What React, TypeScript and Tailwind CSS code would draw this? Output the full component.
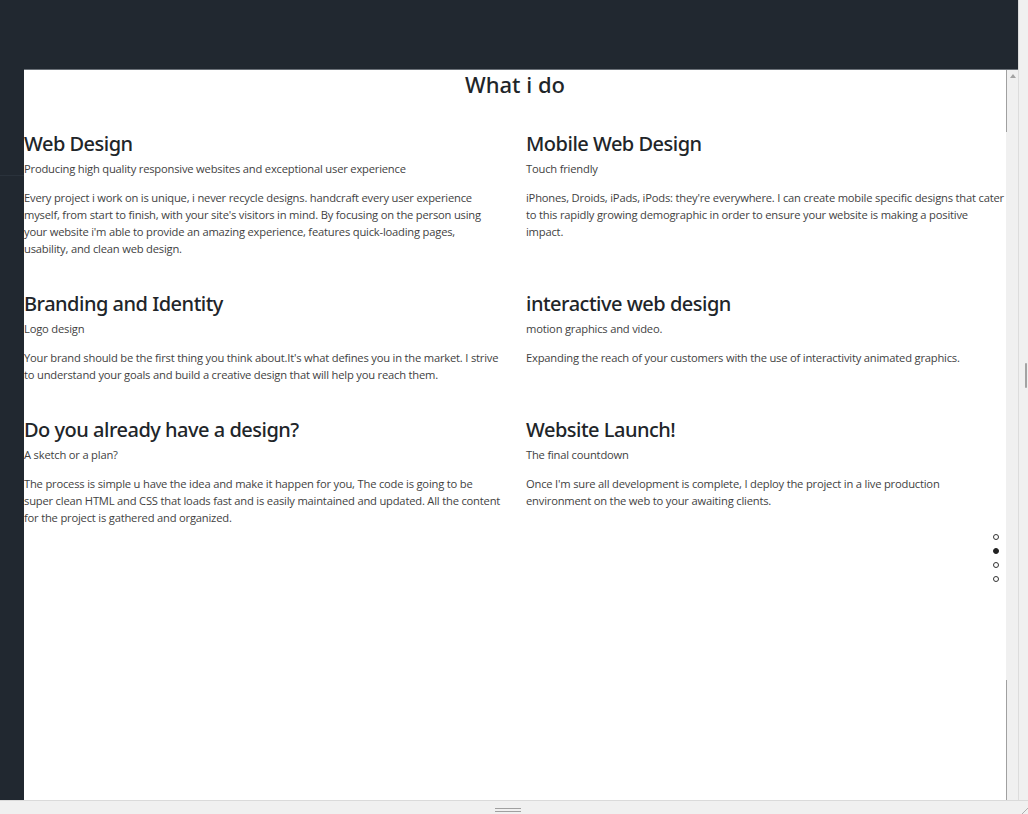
import React from "react";

const items = [
  {
    h: "Web Design",
    s: "Producing high quality responsive websites and exceptional user experience",
    p: "Every project i work on is unique, i never recycle designs. handcraft every user experience myself, from start to finish, with your site's visitors in mind. By focusing on the person using your website i'm able to provide an amazing experience, features quick-loading pages, usability, and clean web design.",
    pw: "w-[474px]",
  },
  {
    h: "Mobile Web Design",
    s: "Touch friendly",
    p: "iPhones, Droids, iPads, iPods: they're everywhere. I can create mobile specific designs that cater to this rapidly growing demographic in order to ensure your website is making a positive impact.",
    pw: "w-[480px]",
  },
  {
    h: "Branding and Identity",
    s: "Logo design",
    p: "Your brand should be the first thing you think about.It's what defines you in the market. I strive to understand your goals and build a creative design that will help you reach them.",
    pw: "w-[480px]",
  },
  {
    h: "interactive web design",
    s: "motion graphics and video.",
    p: "Expanding the reach of your customers with the use of interactivity animated graphics.",
    pw: "w-[480px]",
  },
  {
    h: "Do you already have a design?",
    s: "A sketch or a plan?",
    p: "The process is simple u have the idea and make it happen for you, The code is going to be super clean HTML and CSS that loads fast and is easily maintained and updated. All the content for the project is gathered and organized.",
    pw: "w-[480px]",
  },
  {
    h: "Website Launch!",
    s: "The final countdown",
    p: "Once I'm sure all development is complete, I deploy the project in a live production environment on the web to your awaiting clients.",
    pw: "w-[480px]",
  },
];

export default function App() {
  return (
    <div
      className="flex h-[814px] w-[1028px] flex-col overflow-hidden bg-white"
      style={{ fontFamily: '"Open Sans", "Noto Sans", sans-serif' }}
    >
      <div className="flex min-h-0 flex-1">
        {/* left dark strip */}
        <div className="flex w-[24px] flex-col bg-[#212830]">
          <div className="h-[176px] border-b border-[#2a323b]" />
        </div>
        {/* center */}
        <div className="flex min-w-0 flex-1 flex-col">
          <div className="h-[70px] border-b border-[#6b7178] bg-[#212830]" />
          <div className="flex min-h-0 flex-1">
            <div className="relative min-w-0 flex-1 bg-white">
              <h2 className="text-center font-['Noto_Sans',sans-serif] text-[22px] leading-[28px] font-medium tracking-[0px] text-[#212529]">
                What i do
              </h2>
              <div className="mt-[34px] grid grid-cols-2 gap-x-[22px] gap-y-[35px]">
                {items.map((it) => (
                  <div key={it.h} className="w-[480px]">
                    <h3 className="font-['Noto_Sans',sans-serif] text-[20px] leading-[24px] font-medium tracking-[-0.5px] text-[#212529]">
                      {it.h}
                    </h3>
                    <div className="mt-[4px] text-[11.2px] leading-[17px] tracking-[-0.2px] text-[#3f3f3f]">
                      {it.s}
                    </div>
                    <p className={`mt-[12px] text-[11.2px] leading-[17px] tracking-[-0.2px] text-[#3f3f3f] ${it.pw}`}>
                      {it.p}
                    </p>
                  </div>
                ))}
              </div>
              {/* dots */}
              <div className="absolute top-[464px] right-[7px] flex flex-col gap-[8px]">
                <span className="h-[6px] w-[6px] rounded-full border border-[#333]" />
                <span className="h-[6px] w-[6px] rounded-full border border-[#222] bg-[#222]" />
                <span className="h-[6px] w-[6px] rounded-full border border-[#333]" />
                <span className="h-[6px] w-[6px] rounded-full border border-[#333]" />
              </div>
            </div>
            {/* inner scrollbar */}
            <div className="flex w-[12px] flex-col">
              <div className="flex h-[62px]">
                <div className="w-[1px] bg-[#a0a0a0]" />
                <div className="flex flex-1 justify-center bg-[#f0f0f0] pt-[4px]">
                  <svg width="6" height="4" viewBox="0 0 6 4">
                    <path d="M3 0 L6 4 L0 4 Z" fill="#a3a3a3" />
                  </svg>
                </div>
              </div>
              <div className="flex-1 bg-[#f0f0f0]" />
              <div className="flex h-[120px]">
                <div className="w-[1px] bg-[#a0a0a0]" />
                <div className="flex-1 bg-[#f0f0f0]" />
              </div>
            </div>
          </div>
        </div>
        {/* outer scrollbar */}
        <div className="relative w-[10px] border-l border-[#dcdcdc] bg-[#f0f0f0]">
          <div className="absolute top-[363px] left-[6px] h-[25px] w-[2px] rounded-sm bg-[#a3a3a3]" />
        </div>
      </div>
      {/* bottom bar */}
      <div className="relative h-[14px] border-t border-[#dadada] bg-[#f0f0f0]">
        <div className="absolute top-[7px] left-[495px] flex w-[26px] flex-col gap-[2px]">
          <div className="h-[1px] bg-[#a0a0a0]" />
          <div className="h-[1px] bg-[#a0a0a0]" />
        </div>
        <svg className="absolute right-0 bottom-0" width="6" height="6" viewBox="0 0 6 6">
          <path d="M6 0 L0 6" stroke="#b0b0b0" strokeWidth="1" />
        </svg>
      </div>
    </div>
  );
}
